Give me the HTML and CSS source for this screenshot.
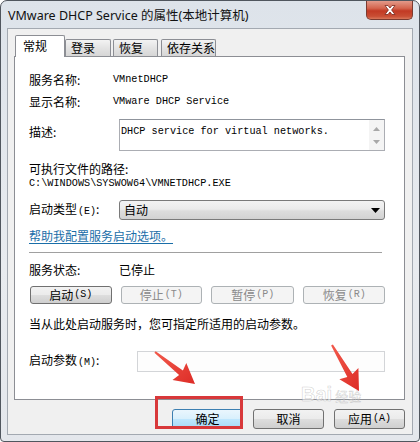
FILE: index.html
```html
<!DOCTYPE html>
<html lang="zh">
<head>
<meta charset="utf-8">
<title>VMware DHCP Service 的属性</title>
<link rel="stylesheet" href="styles.css">
</head>
<body>
<div class="window">
  <div class="titlebar">
    <span class="title">VMware DHCP Service 的属性(本地计算机)</span>
    <div class="close">
      <svg width="16" height="12" viewBox="0 0 16 12"><path d="M3 1.5 L6 1.5 L8 4 L10 1.5 L13 1.5 L9.6 6 L13 10.5 L10 10.5 L8 8 L6 10.5 L3 10.5 L6.4 6 Z" fill="#fff" stroke="#7a2a1e" stroke-width="0.8" stroke-linejoin="round"/></svg>
    </div>
  </div>
  <div class="client">
    <div class="tabs">
      <div class="tab selected">常规</div>
      <div class="tab t2">登录</div>
      <div class="tab t3">恢复</div>
      <div class="tab t4">依存关系</div>
    </div>
    <div class="panel">
      <div class="row r-name">
        <span class="label lbl-name">服务名称:</span>
        <span class="mono">VMnetDHCP</span>
      </div>
      <div class="row r-disp">
        <span class="label lbl-name">显示名称:</span>
        <span class="mono">VMware DHCP Service</span>
      </div>
      <div class="row r-desc">
        <span class="label lbl-desc">描述:</span>
        <div class="textarea">
          <span class="mono">DHCP service for virtual networks.</span>
          <div class="vscroll">
            <svg width="7" height="4" viewBox="0 0 7 4"><path d="M0 4 L3.5 0 L7 4 Z" fill="#a8a8a8"/></svg>
            <svg width="7" height="4" viewBox="0 0 7 4"><path d="M0 0 L3.5 4 L7 0 Z" fill="#a8a8a8"/></svg>
          </div>
        </div>
      </div>
      <div class="row r-path">可执行文件的路径:</div>
      <div class="row r-pathval"><span class="mono">C:\WINDOWS\SYSWOW64\VMNETDHCP.EXE</span></div>
      <div class="row r-type">
        <span class="label lbl-wide">启动类型<span class="mn">(E)</span>:</span>
        <div class="select">
          <span>自动</span>
          <svg width="9" height="5" viewBox="0 0 9 5"><path d="M0 0 L9 0 L4.5 5 Z" fill="#000"/></svg>
        </div>
      </div>
      <div class="row r-link"><a class="link">帮助我配置服务启动选项。</a></div>
      <div class="sep"></div>
      <div class="row r-status">
        <span class="label lbl-wide">服务状态:</span>
        <span>已停止</span>
      </div>
      <div class="btnrow">
        <div class="btn">启动<span class="mn">(S)</span></div>
        <div class="btn disabled">停止<span class="mn">(T)</span></div>
        <div class="btn disabled w83">暂停<span class="mn">(P)</span></div>
        <div class="btn disabled">恢复<span class="mn">(R)</span></div>
      </div>
      <div class="row r-hint">当从此处启动服务时，您可指定所适用的启动参数。</div>
      <div class="row r-param">
        <span class="label lbl-param">启动参数<span class="mn">(M)</span>:</span>
        <div class="input"></div>
      </div>
    </div>
    <div class="footer">
      <div class="btn dlg default">确定</div>
      <div class="btn dlg">取消</div>
      <div class="btn dlg">应用<span class="mn">(A)</span></div>
    </div>
  </div>

  <div class="watermark"><span class="wm-bai">Bai</span><span class="wm-jy">经验</span></div>

  <svg class="overlay" width="420" height="442" viewBox="0 0 420 442">
    <defs>
      <linearGradient id="ar" x1="0" y1="0" x2="1" y2="1">
        <stop offset="0" stop-color="#f25a4c"/>
        <stop offset="1" stop-color="#dd2c27"/>
      </linearGradient>
    </defs>
    <polygon points="154.4,352.8 179.1,375.1 172.5,380.1 195,384 186.3,362.9 182.9,370.4 155.6,351.2" fill="url(#ar)"/>
    <polygon points="331.1,345.5 347.3,376.9 339.4,379.3 359,391 358.4,368.1 352.5,373.9 332.9,344.5" fill="url(#ar)"/>
    <rect x="156.5" y="397.5" width="85" height="30" fill="none" stroke="#d8383a" stroke-width="3"/>
  </svg>
</div>
</body>
</html>
```
FILE: styles.css
```css
html, body {
  margin: 0;
  padding: 0;
  background: #ffffff;
}

body {
  font-family: "Noto Sans CJK SC", "Noto Sans", sans-serif;
  font-size: 12px;
  color: #000;
}

.window {
  position: relative;
  width: 420px;
  height: 442px;
  box-sizing: border-box;
  border: 1px solid #50565e;
  border-radius: 7px 7px 4px 4px;
  background: linear-gradient(#dde3ea, #e8ebef 60%, #e4e7ec);
  display: flex;
  flex-direction: column;
  padding: 0 6px 6px 6px;
  overflow: hidden;
}

.titlebar {
  height: 27px;
  display: flex;
  align-items: flex-start;
}

.title {
  font-family: "Noto Sans", "Noto Sans CJK SC", sans-serif;
  font-size: 12.5px;
  line-height: 16px;
  margin-top: 7px;
  margin-left: 1px;
  color: #111;
}

.close {
  margin-left: auto;
  width: 47px;
  height: 19px;
  box-sizing: border-box;
  border: 1px solid #7b3b30;
  border-top: none;
  border-radius: 0 0 5px 5px;
  background: linear-gradient(#e39a8a 0%, #d4654e 40%, #c23a24 55%, #c94e34 85%, #d9775a 100%);
  display: flex;
  align-items: center;
  justify-content: center;
}

.client {
  flex: 1;
  border: 1px solid #a3a9b1;
  background: #f0f0f0;
  padding: 7px 7px 0 6px;
  display: flex;
  flex-direction: column;
}

.tabs {
  display: flex;
  height: 20px;
  align-items: flex-end;
  position: relative;
  z-index: 2;
}

.tab {
  box-sizing: border-box;
  height: 17px;
  border: 1px solid #8c8e94;
  border-bottom: none;
  border-radius: 2px 2px 0 0;
  background: linear-gradient(#f3f3f3, #e3e3e3 50%, #d6d6d6);
  line-height: 16px;
  padding-left: 5px;
}

.tab.selected {
  height: 22px;
  margin-bottom: -1px;
  margin-left: 1px;
  width: 50px;
  background: #fff;
  padding-left: 7px;
  line-height: 20px;
  border-color: #8c8e94;
}

.t2 { width: 46px; }
.t3 { width: 45px; margin-left: 2px; }
.t4 { width: 55px; margin-left: 3px; }

.panel {
  box-sizing: border-box;
  height: 344px;
  width: 391px;
  border: 1px solid #8c8e94;
  background: #fff;
  padding: 15px 19px 0 14px;
  display: flex;
  flex-direction: column;
}

.row {
  display: flex;
  align-items: center;
  line-height: 16px;
}

.label {
  flex: none;
}

.lbl-name { width: 84px; }
.lbl-desc { width: 90px; align-self: flex-start; margin-top: 5px; }
.lbl-wide { width: 90px; }
.lbl-param { width: 108px; }

.mono {
  font-family: "Liberation Mono", "DejaVu Sans Mono", monospace;
  font-size: 10.2px;
  line-height: 14px;
}

.mn {
  font-family: "Liberation Mono", monospace;
  font-size: 10px;
  margin-left: 1px;
}

.r-disp { margin-top: 6px; }

.r-desc {
  margin-top: 9px;
  align-items: flex-start;
}

.textarea {
  position: relative;
  box-sizing: border-box;
  width: 266px;
  height: 32px;
  border: 1px solid #abadb3;
  border-top-color: #8f949c;
  background: #fff;
  padding: 1px 0 0 1px;
}

.vscroll {
  position: absolute;
  right: 0;
  top: 0;
  bottom: 0;
  width: 15px;
  background: #f4f4f4;
  display: flex;
  flex-direction: column;
  align-items: center;
  justify-content: space-between;
  padding: 7px 0 6px;
  box-sizing: border-box;
}

.r-path { margin-top: 10px; }
.r-pathval { line-height: 14px; }

.r-type { margin-top: 9px; }

.select {
  box-sizing: border-box;
  width: 266px;
  height: 20px;
  border: 1px solid #7a7a7a;
  border-radius: 3px;
  background: linear-gradient(#f3f3f3, #ebebeb 45%, #dddddd 55%, #d2d2d2);
  display: flex;
  align-items: center;
  justify-content: space-between;
  padding: 0 4px 0 4px;
  line-height: 16px;
}

.r-link { margin-top: 8px; }

.link {
  color: #1a6ea8;
  text-decoration: underline;
  text-underline-offset: 2px;
}

.sep {
  width: 353px;
  height: 1px;
  margin-top: 8px;
  background: #a0a0a0;
  border-bottom: 1px solid #fff;
}

.r-status { margin-top: 8px; }

.btnrow {
  margin-top: 8px;
  display: flex;
  gap: 9px;
  padding-left: 1px;
}

.btn {
  box-sizing: border-box;
  width: 82px;
  height: 18px;
  border: 1px solid #707070;
  border-radius: 3px;
  background: linear-gradient(#f2f2f2, #ebebeb 48%, #dddddd 52%, #cfcfcf);
  display: flex;
  align-items: center;
  justify-content: center;
  line-height: 16px;
}

.btn.w83 { width: 84px; }

.btn.disabled {
  border-color: #adb2b5;
  background: #f4f4f4;
  color: #8a8a8a;
}

.r-hint { margin-top: 12px; }

.r-param { margin-top: 19px; }

.input {
  box-sizing: border-box;
  width: 248px;
  height: 21px;
  border: 1px solid #d3d5d8;
  background: #fdfdfd;
}

.footer {
  display: flex;
  justify-content: flex-end;
  gap: 10px;
  padding-top: 9px;
  padding-right: 0;
}

.btn.dlg {
  width: 71px;
  height: 20px;
}

.btn.default {
  border-color: #3c7fb1;
  background: linear-gradient(#eaf6fd, #d9f0fc 48%, #bee6fd 52%, #a7d9f5);
}

.watermark {
  position: absolute;
  left: 300px;
  top: 382px;
  display: flex;
  align-items: baseline;
  gap: 3px;
  pointer-events: none;
}

.wm-bai {
  font-family: "Liberation Sans", sans-serif;
  font-weight: bold;
  font-size: 20px;
  line-height: 22px;
  color: rgba(255, 255, 255, 0.5);
  -webkit-text-stroke: 0.6px rgba(120, 120, 120, 0.35);
}

.wm-jy {
  font-size: 13px;
  line-height: 16px;
  color: rgba(255, 255, 255, 0.5);
  -webkit-text-stroke: 0.5px rgba(120, 120, 120, 0.35);
}

.overlay {
  position: absolute;
  left: -1px;
  top: -1px;
  pointer-events: none;
}
```
